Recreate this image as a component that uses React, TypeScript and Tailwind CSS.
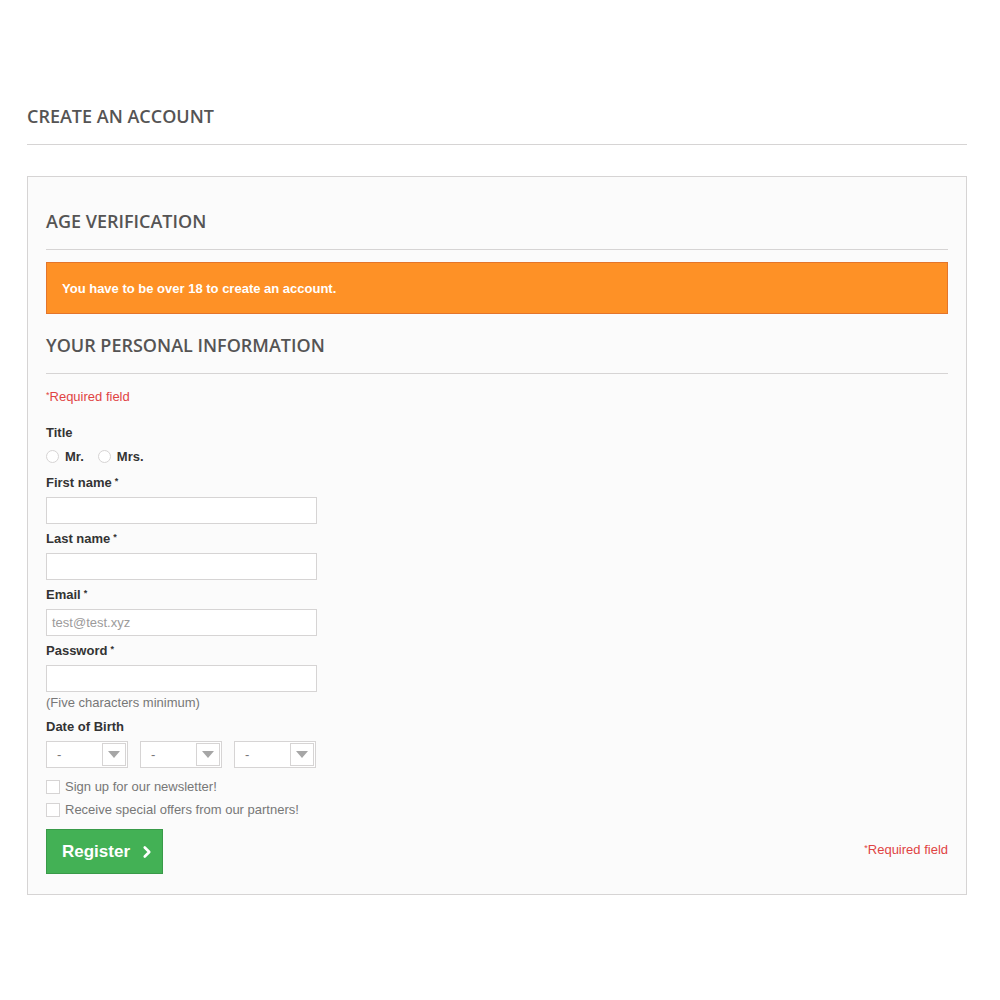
import { ChevronRight } from 'lucide-react';

const head = "font-['Open_Sans',sans-serif] font-semibold uppercase text-[18px] leading-[22px] text-[#555454]";

function Req() {
  return <sup className="text-[9px] text-[#333] ml-[3px] relative top-[-3px]">*</sup>;
}

function Label({ text, req, className = '' }: { text: string; req?: boolean; className?: string }) {
  return (
    <div className={`text-[13px] leading-[18px] pt-[1px] font-bold text-[#333] ${className}`}>
      {text}
      {req && <Req />}
    </div>
  );
}

function Input({ placeholder, className = '' }: { placeholder?: string; className?: string }) {
  return (
    <div className={`w-[271px] h-[27px] bg-white border border-[#d6d4d4] px-[5px] flex items-center text-[13px] text-[#9c9b9b] ${className}`}>
      {placeholder}
    </div>
  );
}

function Select() {
  return (
    <div className="w-[82px] h-[27px] bg-white border border-[#d6d4d4] flex items-center justify-between text-[13px] text-[#777]">
      <span className="pl-[10px]">-</span>
      <div className="w-[24px] h-[23px] mr-[1px] border border-[#d6d4d4] flex items-center justify-center">
        <svg width="12" height="7" viewBox="0 0 12 7">
          <path d="M0 0 L12 0 L6 7 Z" fill="#a6a6a6" />
        </svg>
      </div>
    </div>
  );
}

function Check({ text, className = '' }: { text: string; className?: string }) {
  return (
    <div className={`flex items-center gap-[5px] text-[13px] leading-[18px] text-[#777] ${className}`}>
      <span className="w-[14px] h-[14px] border border-[#d6d4d4] bg-white" />
      <span className="pt-[1px]">{text}</span>
    </div>
  );
}

function Radio({ text }: { text: string }) {
  return (
    <div className="flex items-center gap-[6px]">
      <span className="w-[13px] h-[13px] rounded-full border border-[#d6d4d4] bg-white" />
      <span className="font-bold text-[13px] text-[#333] pt-[2px]">{text}</span>
    </div>
  );
}

function RequiredNote({ className = '' }: { className?: string }) {
  return (
    <div className={`text-[13px] leading-[18px] text-[#e04343] ${className}`}>
      <sup className="text-[9px] relative top-[-3px]">*</sup>Required field
    </div>
  );
}

export default function App() {
  return (
    <div className="min-h-[1000px] bg-white font-['Liberation_Sans',Arial,sans-serif] px-[27px] pt-[105px]">
      <div className="w-[940px]">
        <h1 className={`${head} pb-[17px] border-b border-[#d6d4d4]`}>Create an account</h1>

        <div className="mt-[31px] border border-[#d6d4d4] bg-[#fbfbfb] px-[18px] pt-[33px] pb-[20px]">
          <h2 className={`${head} pb-[17px] border-b border-[#d6d4d4]`}>Age verification</h2>

          <div className="mt-[12px] h-[52px] bg-[#fe9126] border border-[#e4752b] flex items-center px-[15px] pt-[1px] text-white font-bold text-[13px]">
            You have to be over 18 to create an account.
          </div>

          <h2 className={`${head} mt-[20px] pb-[17px] border-b border-[#d6d4d4]`}>Your personal information</h2>

          <RequiredNote className="mt-[13px] pt-[1px]" />

          <Label text="Title" className="mt-[17px]" />
          <div className="flex items-center gap-[14px] h-[18px] mt-[5px]">
            <Radio text="Mr." />
            <Radio text="Mrs." />
          </div>

          <Label text="First name" req className="mt-[8px]" />
          <Input className="mt-[5px]" />
          <Label text="Last name" req className="mt-[5px]" />
          <Input className="mt-[5px]" />
          <Label text="Email" req className="mt-[5px]" />
          <Input placeholder="test@test.xyz" className="mt-[5px]" />
          <Label text="Password" req className="mt-[5px]" />
          <Input className="mt-[5px]" />
          <div className="mt-[1px] pt-[1px] text-[13px] leading-[18px] text-[#777]">(Five characters minimum)</div>

          <Label text="Date of Birth" className="mt-[5px]" />
          <div className="mt-[5px] flex gap-[12px]">
            <Select />
            <Select />
            <Select />
          </div>

          <Check text="Sign up for our newsletter!" className="mt-[9px]" />
          <Check text="Receive special offers from our partners!" className="mt-[4px]" />

          <div className="mt-[10px] flex items-center justify-between">
            <button className="h-[45px] w-[117px] bg-[#43b155] border border-[#399a49] flex items-center pl-[15px] gap-[8px] text-white font-bold text-[17px]">
              Register
              <ChevronRight size={18} strokeWidth={3.5} />
            </button>
            <RequiredNote className="mb-[4px]" />
          </div>
        </div>
      </div>
    </div>
  );
}
